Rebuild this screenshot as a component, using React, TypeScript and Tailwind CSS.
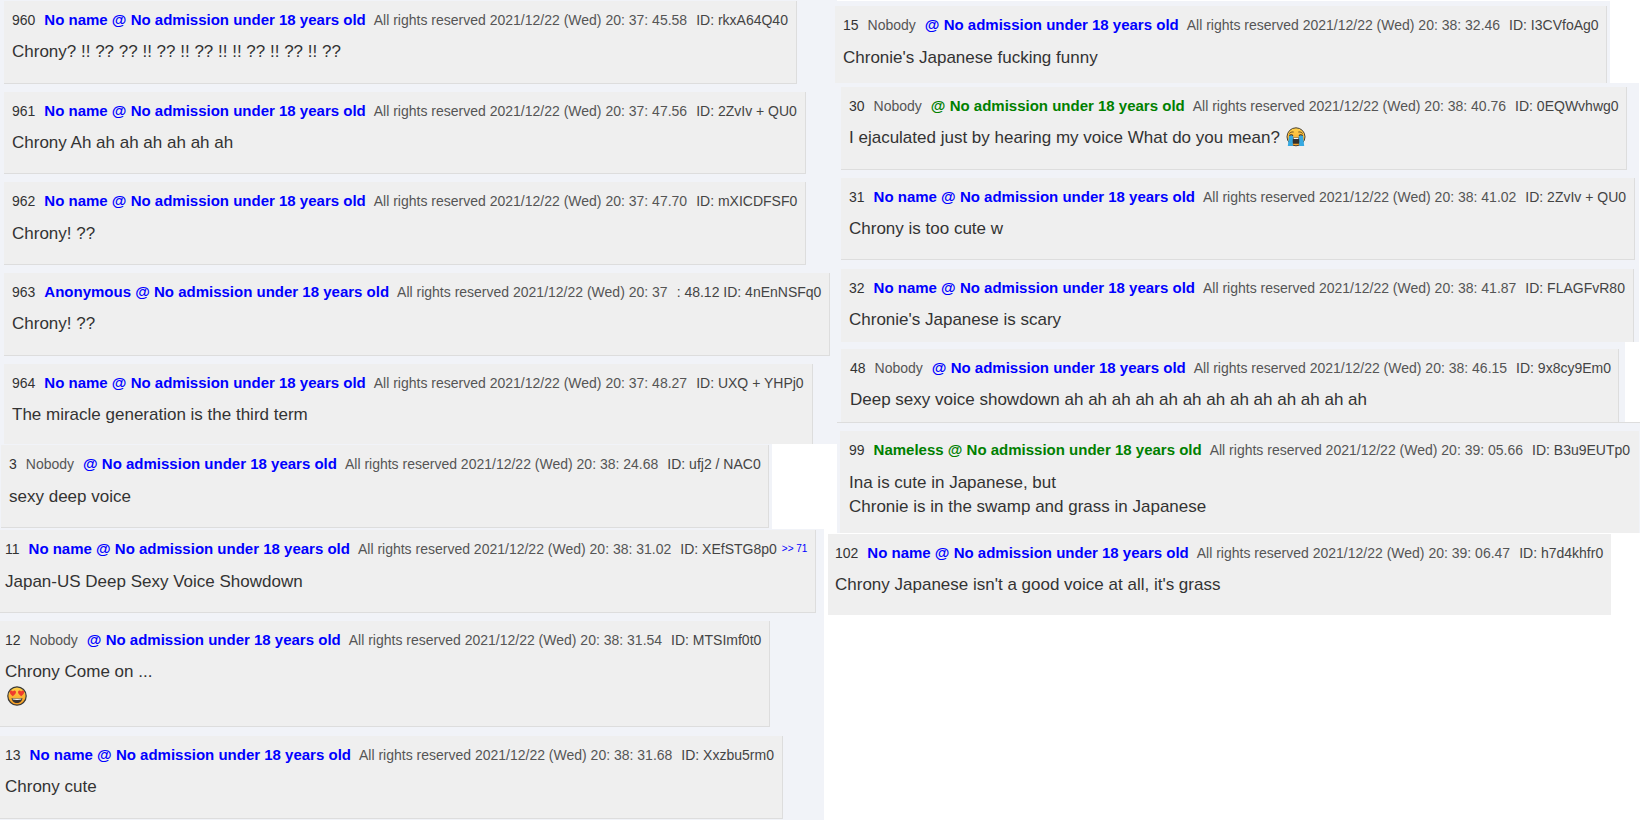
import type { ReactNode } from "react";

type Post = {
  no: string;
  who?: string; // grey name that sits outside the link
  name: string;
  date: string;
  id: string;
  green?: boolean;
  low?: boolean; // body sits one pixel lower in these crops
  link?: string;
  strip: string;
  box: string;
  body: ReactNode;
};

function HeartEyes() {
  return (
    <svg viewBox="0 0 20 20" className="ml-[2px] h-[20px] w-[20px]">
      <defs>
        <linearGradient id="he" x1="0" y1="0" x2="0" y2="1">
          <stop offset="0" stopColor="#ffd24a" />
          <stop offset="1" stopColor="#f59a23" />
        </linearGradient>
      </defs>
      <circle cx="10" cy="10" r="9.2" fill="url(#he)" stroke="#3a3a3a" strokeWidth="1.2" />
      <path d="M5.8 10.2C4.2 9 2.8 7.9 2.8 6.3 2.8 4.4 5 3.9 5.9 5.4 6.8 3.9 9 4.4 9 6.3 9 7.9 7.4 9 5.8 10.2Z" fill="#ef3b2d" />
      <path d="M14.2 10.2C12.6 9 11 7.9 11 6.3 11 4.4 13.2 3.9 14.1 5.4 15 3.9 17.2 4.4 17.2 6.3 17.2 7.9 15.8 9 14.2 10.2Z" fill="#ef3b2d" />
      <path d="M4.6 12C6.5 12.7 13.5 12.7 15.4 12 15.2 15.4 12.8 17 10 17 7.2 17 4.8 15.4 4.6 12Z" fill="#3b3430" />
      <path d="M5.6 12.4C7.5 12.9 12.5 12.9 14.4 12.4L14.2 13.6C12 14 8 14 5.8 13.6Z" fill="#f4f4f4" />
    </svg>
  );
}

function LoudCry() {
  return (
    <svg viewBox="0 0 20 20" className="ml-[6px] inline-block h-[20px] w-[20px] align-[-4px]">
      <defs>
        <linearGradient id="lc" x1="0" y1="0" x2="0" y2="1">
          <stop offset="0" stopColor="#ffd24a" />
          <stop offset="1" stopColor="#f6a02a" />
        </linearGradient>
      </defs>
      <circle cx="10" cy="9.8" r="9" fill="url(#lc)" stroke="#4a4030" strokeWidth="1" />
      <path d="M3.4 6.5C4.5 5.2 6 4.8 7.6 5M16.6 6.5C15.5 5.2 14 4.8 12.4 5" fill="none" stroke="#5a4420" strokeWidth="1" />
      <path d="M3 8.2H7.2V8.9L6.8 19H1.8L3 8.9Z" fill="#36a9e1" />
      <path d="M12.8 8.2H17V8.9L18.2 19H13.2L12.8 8.9Z" fill="#36a9e1" />
      <path d="M3.4 8.6C4.4 7.4 6 7.4 7 8.6M13 8.6C14 7.4 15.6 7.4 16.6 8.6" fill="none" stroke="#3b3430" strokeWidth="1.1" />
      <path d="M7.2 10.6H12.8C13.4 12.5 13.4 15 13 16.8H7C6.6 15 6.6 12.5 7.2 10.6Z" fill="#34302c" />
      <rect x="7.6" y="10.8" width="4.8" height="1.2" fill="#f4f4f4" />
    </svg>
  );
}

function Entry({ post }: { post: Post }) {
  return (
    <div className={post.strip}>
      <div className={`bg-[#efefef] pt-[9px] ${post.box}`}>
        <div className="flex h-5 items-center gap-[9px] whitespace-nowrap text-[14px] leading-5 text-[#444]">
          <span className="text-[#333]">{post.no}</span>
          {post.who && <span className="text-[#555]">{post.who}</span>}
          <span className={post.green ? "-mr-px text-[15px] font-bold text-[#008000]" : "-mr-px text-[15px] font-bold text-[#0000ff]"}>{post.name}</span>
          <span className="text-[#555]">{post.date}</span>
          <span className="text-[#444]">{post.id}</span>
          {post.link && <span className="-ml-1 text-[10px] text-[#0000ff]">{post.link}</span>}
        </div>
        <div className={post.low ? "mt-[11px] text-[17px] leading-6 text-[#333]" : "mt-[10px] text-[17px] leading-6 text-[#333]"}>{post.body}</div>
      </div>
    </div>
  );
}

const AGE = "No admission under 18 years old";
const RIGHTS = "All rights reserved 2021/12/22 (Wed)";
const edge = "border-r border-b border-[#ddd]";

const topLeft: Post[] = [
  { no: "960", name: `No name @ ${AGE}`, date: `${RIGHTS} 20: 37: 45.58`, id: "ID: rkxA64Q40", strip: "pt-px pb-2 pl-1", box: `h-[83px] w-[793px] pl-2 ${edge}`, body: "Chrony? !! ?? ?? !! ?? !! ?? !! !! ?? !! ?? !! ??" },
  { no: "961", name: `No name @ ${AGE}`, date: `${RIGHTS} 20: 37: 47.56`, id: "ID: 2ZvIv + QU0", strip: "pb-2 pl-1", box: `h-[82px] w-[802px] pl-2 ${edge}`, body: "Chrony Ah ah ah ah ah ah ah" },
  { no: "962", name: `No name @ ${AGE}`, date: `${RIGHTS} 20: 37: 47.70`, id: "ID: mXICDFSF0", low: true, strip: "pb-2 pl-1", box: `h-[83px] w-[802px] pl-2 ${edge}`, body: "Chrony! ??" },
  { no: "963", name: `Anonymous @ ${AGE}`, date: `${RIGHTS} 20: 37`, id: ": 48.12 ID: 4nEnNSFq0", strip: "relative z-10 pb-2 pl-1", box: `h-[83px] w-[826px] pl-2 ${edge}`, body: "Chrony! ??" },
  { no: "964", name: `No name @ ${AGE}`, date: `${RIGHTS} 20: 37: 48.27`, id: "ID: UXQ + YHPj0", strip: "pl-1", box: "h-[80px] w-[809px] border-r border-[#ddd] pl-2", body: "The miracle generation is the third term" },
];

const sexy: Post = { no: "3", who: "Nobody", name: `@ ${AGE}`, date: `${RIGHTS} 20: 38: 24.68`, id: "ID: ufj2 / NAC0", low: true, strip: "w-[772px] bg-[#f1f3f8] pt-px pb-px pl-px", box: `h-[83px] w-[768px] pl-2 ${edge}`, body: "sexy deep voice" };

const bottomLeft: Post[] = [
  { no: "11", name: `No name @ ${AGE}`, date: `${RIGHTS} 20: 38: 31.02`, id: "ID: XEfSTG8p0", link: ">> 71", low: true, strip: "pt-px pb-2", box: `h-[83px] w-[816px] pl-[5px] ${edge}`, body: "Japan-US Deep Sexy Voice Showdown" },
  {
    no: "12",
    who: "Nobody",
    name: `@ ${AGE}`,
    date: `${RIGHTS} 20: 38: 31.54`,
    id: "ID: MTSImf0t0",
    strip: "pb-[9px]",
    box: `h-[106px] w-[770px] pl-[5px] ${edge}`,
    body: (
      <>
        <div>Chrony Come on ...</div>
        <div className="flex h-6 items-center">
          <HeartEyes />
        </div>
      </>
    ),
  },
  { no: "13", name: `No name @ ${AGE}`, date: `${RIGHTS} 20: 38: 31.68`, id: "ID: Xxzbu5rm0", strip: "pb-px", box: `h-[83px] w-[783px] pl-[5px] ${edge}`, body: "Chrony cute" },
];

const rightCol: Post[] = [
  { no: "15", who: "Nobody", name: `@ ${AGE}`, date: `${RIGHTS} 20: 38: 32.46`, id: "ID: I3CVfoAg0", low: true, strip: "mt-px w-[786px] bg-[#f1f3f8] pt-[5px] pl-[11px]", box: "h-[77px] w-[772px] border-r border-[#ddd] pl-2", body: "Chronie's Japanese fucking funny" },
  {
    no: "30",
    who: "Nobody",
    name: `@ ${AGE}`,
    green: true,
    date: `${RIGHTS} 20: 38: 40.76`,
    id: "ID: 0EQWvhwg0",
    strip: "w-[815px] bg-[#f1f3f8] pt-1 pb-2 pl-[17px]",
    box: `h-[83px] w-[786px] pl-2 ${edge}`,
    body: (
      <>
        I ejaculated just by hearing my voice What do you mean?
        <LoudCry />
      </>
    ),
  },
  { no: "31", name: `No name @ ${AGE}`, date: `${RIGHTS} 20: 38: 41.02`, id: "ID: 2ZvIv + QU0", strip: "w-[815px] bg-[#f1f3f8] pb-2 pl-[17px]", box: `h-[82px] w-[794px] pl-2 ${edge}`, body: "Chrony is too cute w" },
  { no: "32", name: `No name @ ${AGE}`, date: `${RIGHTS} 20: 38: 41.87`, id: "ID: FLAGFvR80", strip: "w-[815px] bg-[#f1f3f8] pt-px pl-[17px]", box: "h-[73px] w-[793px] border-r border-[#ddd] pl-2", body: "Chronie's Japanese is scary" },
  { no: "48", who: "Nobody", name: `@ ${AGE}`, date: `${RIGHTS} 20: 38: 46.15`, id: "ID: 9x8cy9Em0", strip: "w-[801px] bg-[#f1f3f8] pt-[7px] pl-[17px]", box: "h-[73px] w-[778px] border-r border-[#ddd] pl-[9px]", body: "Deep sexy voice showdown ah ah ah ah ah ah ah ah ah ah ah ah ah" },
  {
    no: "99",
    name: `Nameless @ ${AGE}`,
    green: true,
    low: true,
    date: `${RIGHTS} 20: 39: 05.66`,
    id: "ID: B3u9EUTp0",
    strip: "ml-[13px] w-[803px] border-t border-[#ddd] bg-[#f1f3f8] pt-2 pl-[3px]",
    box: "h-[102px] w-[799px] pl-[9px]",
    body: (
      <>
        <div>Ina is cute in Japanese, but</div>
        <div>Chronie is in the swamp and grass in Japanese</div>
      </>
    ),
  },
  { no: "102", name: `No name @ ${AGE}`, date: `${RIGHTS} 20: 39: 06.47`, id: "ID: h7d4khfr0", strip: "pt-px pl-1", box: "h-[81px] w-[783px] pl-[7px]", body: "Chrony Japanese isn't a good voice at all, it's grass" },
];

export default function App() {
  return (
    <div className="flex min-h-screen bg-white font-['Liberation_Sans',Arial,sans-serif]">
      <div className="w-[837px] shrink-0">
        <div className="bg-[#f1f3f8]">
          {topLeft.map((p) => (
            <Entry key={p.no} post={p} />
          ))}
        </div>
        <Entry post={sexy} />
        <div className="w-[824px] bg-[#f1f3f8]">
          {bottomLeft.map((p) => (
            <Entry key={p.no} post={p} />
          ))}
        </div>
      </div>
      <div className="relative -ml-[13px] w-[827px]">
        {rightCol.map((p) => (
          <Entry key={p.no} post={p} />
        ))}
      </div>
    </div>
  );
}
